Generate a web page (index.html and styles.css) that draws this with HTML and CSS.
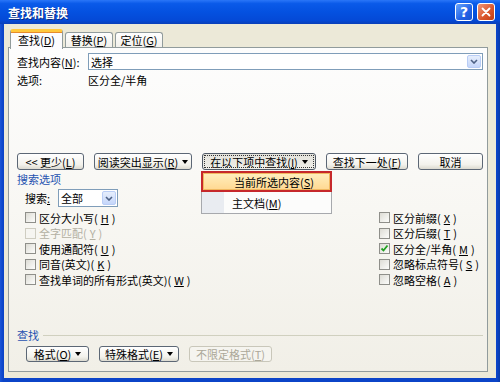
FILE: index.html
```html
<!DOCTYPE html>
<html>
<head>
<meta charset="utf-8">
<link rel="stylesheet" href="styles.css">
<title>查找和替换</title>
</head>
<body>
<div class="window">
  <div class="titlebar">
    <span class="title">查找和替换</span>
    <span class="cap help">?</span>
    <span class="cap close">
      <svg width="12" height="12" viewBox="0 0 12 12"><path d="M2.5 2.5L9.5 9.5M9.5 2.5L2.5 9.5" stroke="#fff" stroke-width="1.8" stroke-linecap="round"/></svg>
    </span>
  </div>
  <div class="frame">
    <div class="tabs">
      <span class="tab active">查找(<u>D</u>)</span>
      <span class="tab">替换(<u>P</u>)</span>
      <span class="tab">定位(<u>G</u>)</span>
    </div>
    <div class="panel">
      <div class="field">
        <span class="label">查找内容(<u>N</u>):</span>
        <div class="combo">
          <span class="combo-text">选择</span>
          <span class="drop"><svg width="8" height="5" viewBox="0 0 8 5"><path d="M1 1L4 4L7 1" fill="none" stroke="#4d6185" stroke-width="1.6"/></svg></span>
        </div>
      </div>
      <div class="field options">
        <span class="label">选项:</span>
        <span>区分全/半角</span>
      </div>

      <div class="btnrow">
        <button class="btn w-less">&lt;&lt; 更少(<u>L</u>)</button>
        <button class="btn w-read">阅读突出显示(<u>R</u>)<i class="arrow"></i></button>
        <div class="menu-wrap">
          <button class="btn pressed w-in"><span class="focus">在以下项中查找(<u>I</u>)<i class="arrow"></i></span></button>
          <div class="menu">
            <div class="item hot">当前所选内容(<u>S</u>)</div>
            <div class="item">主文档(<u>M</u>)</div>
          </div>
        </div>
        <button class="btn w-next">查找下一处(<u>F</u>)</button>
        <button class="btn w-cancel">取消</button>
      </div>

      <div class="legend">搜索选项</div>
      <div class="search">
        <span class="search-label">搜索<u>:</u></span>
        <div class="select">
          <span class="combo-text">全部</span>
          <span class="drop"><svg width="8" height="5" viewBox="0 0 8 5"><path d="M1 1L4 4L7 1" fill="none" stroke="#4d6185" stroke-width="1.6"/></svg></span>
        </div>
      </div>

      <div class="checks">
        <div class="check"><span class="box"></span>区分大小写(<u>H</u>)</div>
        <div class="check"><span class="box"></span>区分前缀(<u>X</u>)</div>
        <div class="check disabled"><span class="box"></span>全字匹配(<u>Y</u>)</div>
        <div class="check"><span class="box"></span>区分后缀(<u>T</u>)</div>
        <div class="check"><span class="box"></span>使用通配符(<u>U</u>)</div>
        <div class="check"><span class="box"><svg width="9" height="9" viewBox="0 0 9 9"><path d="M1.5 4.5L3.5 6.5L7.5 1.5" fill="none" stroke="#21a121" stroke-width="1.8"/></svg></span>区分全/半角(<u>M</u>)</div>
        <div class="check"><span class="box"></span>同音(英文)(<u>K</u>)</div>
        <div class="check"><span class="box"></span>忽略标点符号(<u>S</u>)</div>
        <div class="check"><span class="box"></span>查找单词的所有形式(英文)(<u>W</u>)</div>
        <div class="check"><span class="box"></span>忽略空格(<u>A</u>)</div>
      </div>

      <div class="group">
        <div class="group-head"><span class="legend">查找</span><span class="rule"></span></div>
        <div class="btnrow bottom">
          <button class="btn w-fmt">格式(<u>O</u>)<i class="arrow"></i></button>
          <button class="btn w-special">特殊格式(<u>E</u>)<i class="arrow"></i></button>
          <button class="btn w-nofmt" disabled>不限定格式(<u>T</u>)</button>
        </div>
      </div>
    </div>
  </div>
</div>
</body>
</html>
```

FILE: styles.css
```css
* {
	box-sizing: border-box;
}
body {
	margin: 0;
	font-family: "Noto Sans CJK SC", sans-serif;
	font-size: 11px;
	color: #000;
}
button {
	font: inherit;
	color: inherit;
	padding: 0;
}
u {
	text-underline-offset: 1px;
}

.window {
	width: 500px;
	height: 382px;
	display: flex;
	flex-direction: column;
	background: linear-gradient(90deg, #1a55d8, #0b44c8 3px, #0b44c8 497px, #083aa8);
}

/* title bar */
.titlebar {
	height: 24px;
	display: flex;
	align-items: center;
	padding: 0 5px 0 8px;
	background: linear-gradient(#2a76f8 0%, #0a5ae9 15%, #0451e0 50%, #0449d6 85%, #0a3fb8 100%);
}
.title {
	flex: 1;
	color: #fff;
	font-weight: bold;
	font-size: 12px;
	text-shadow: 1px 1px #0a2a80;
}
.cap {
	width: 18px;
	height: 18px;
	margin-left: 4px;
	border: 1px solid #fff;
	border-radius: 3px;
	display: flex;
	align-items: center;
	justify-content: center;
}
.help {
	background: linear-gradient(135deg, #6aa6fc, #2262e6 60%, #1a52cf);
	color: #fff;
	font: bold 14px "DejaVu Sans", sans-serif;
}
.close {
	background: linear-gradient(135deg, #f0967a, #d9542a 60%, #c23e14);
}

/* dialog body */
.frame {
	flex: 1;
	margin: 0 4px 4px;
	background: #ece9d8;
	padding: 4px 8px 6px 4px;
	display: flex;
	flex-direction: column;
}
.tabs {
	height: 19px;
	display: flex;
	align-items: flex-end;
	padding-left: 2px;
	position: relative;
	z-index: 2;
}
.tab {
	width: 48px;
	height: 15px;
	margin-left: 2px;
	border: 1px solid #919b9c;
	border-bottom: none;
	border-radius: 3px 3px 0 0;
	background: linear-gradient(#fefefe, #f2f1ec);
	display: flex;
	align-items: center;
	justify-content: center;
}
.tab.active {
	width: 53px;
	height: 20px;
	margin-left: 0;
	margin-bottom: -2px;
	background: #fcfcfe;
	border-top: 3px solid #ffc83c;
	box-shadow: inset 0 1px #e68b2c;
	padding-bottom: 2px;
}

.panel {
	flex: 1;
	border: 1px solid #919b9c;
	background: linear-gradient(#fdfdfd, #f8f7f3 50%, #f1efe7);
	padding: 5px 4px 9px 8px;
	display: flex;
	flex-direction: column;
}
.field {
	height: 17px;
	display: flex;
	align-items: center;
}
.field.options {
	height: 14px;
	margin-top: 3px;
}
.label {
	width: 71px;
	flex: none;
}
.combo,
.select {
	flex: 1;
	height: 17px;
	border: 1px solid #7f9db9;
	background: #fff;
	display: flex;
	align-items: center;
	padding: 1px 1px 1px 2px;
}
.combo-text {
	flex: 1;
}
.drop {
	width: 14px;
	align-self: stretch;
	border: 1px solid #b9cdf6;
	border-radius: 2px;
	background: linear-gradient(#e6eefc, #c5d6fa);
	display: flex;
	align-items: center;
	justify-content: center;
}

/* buttons */
.btnrow {
	display: flex;
	gap: 10px;
	margin-top: 66px;
}
.btn {
	height: 17px;
	border: 1px solid #5c6775;
	border-radius: 3px;
	background: linear-gradient(#ffffff, #f3f2ec 70%, #dcdad0);
	display: flex;
	align-items: center;
	justify-content: center;
	white-space: nowrap;
}
.btn.pressed {
	background: linear-gradient(#e4e3dc, #efeee8);
	border-color: #4f5966;
}
.btn:disabled {
	border-color: #c9c7ba;
	color: #aca899;
	background: #f5f4ef;
}
.focus {
	flex: 1;
	align-self: stretch;
	margin: 2px;
	outline: 1px dotted #333;
	display: flex;
	align-items: center;
	justify-content: center;
}
.arrow {
	display: inline-block;
	margin-left: 4px;
	border-left: 3px solid transparent;
	border-right: 3px solid transparent;
	border-top: 4px solid #000;
}
.w-less { width: 67px; }
.w-read { width: 98px; }
.w-in { width: 114px; }
.w-next { width: 82px; }
.w-cancel { width: 65px; }

.menu-wrap {
	position: relative;
}
.menu {
	position: absolute;
	top: 18px;
	left: -1px;
	width: 131px;
	z-index: 5;
	background: linear-gradient(90deg, #e9ecf1 22px, #fcfcfb 22px);
	border: 1px solid #a7a9ad;
	border-top: none;
}
.item {
	height: 21px;
	padding-left: 30px;
	display: flex;
	align-items: center;
}
.item.hot {
	margin: 0 -1px;
	padding-left: 31px;
	border: 2px solid #c6282b;
	background: linear-gradient(#ffefbf, #ffd891);
	box-shadow: inset 0 0 0 1px #f0b860;
}

/* search options */
.legend {
	color: #1f52b0;
	height: 14px;
	margin-top: 2px;
	line-height: 14px;
}
.search {
	height: 18px;
	margin-top: 3px;
	padding-left: 8px;
	display: flex;
	align-items: center;
}
.search-label {
	width: 33px;
}
.select {
	flex: none;
	width: 60px;
	height: 18px;
}
.checks {
	margin-top: 3px;
	padding-left: 8px;
	display: grid;
	grid-template-columns: 354px 1fr;
}
.check {
	height: 15.5px;
	display: flex;
	align-items: center;
	gap: 3px;
	white-space: nowrap;
}
.box {
	width: 11px;
	height: 11px;
	flex: none;
	border: 1px solid #8f8f8a;
	background: linear-gradient(135deg, #dddcd5, #fdfdfb);
	display: flex;
	align-items: center;
	justify-content: center;
}
.check.disabled {
	color: #b3b0a2;
}
.check.disabled .box {
	border-color: #cfcdc1;
	background: #f6f5f1;
}

/* bottom group */
.group {
	margin-top: auto;
}
.group-head {
	height: 14px;
	display: flex;
	align-items: center;
}
.group-head .legend {
	margin-top: 0;
}
.rule {
	flex: 1;
	margin-left: 4px;
	border-top: 1px solid #d0d0bf;
}
.btnrow.bottom {
	margin-top: 4px;
	padding-left: 9px;
}
.btnrow.bottom .btn {
	height: 16px;
}
.w-fmt { width: 63px; }
.w-special { width: 80px; }
.w-nofmt { width: 83px; }
```
